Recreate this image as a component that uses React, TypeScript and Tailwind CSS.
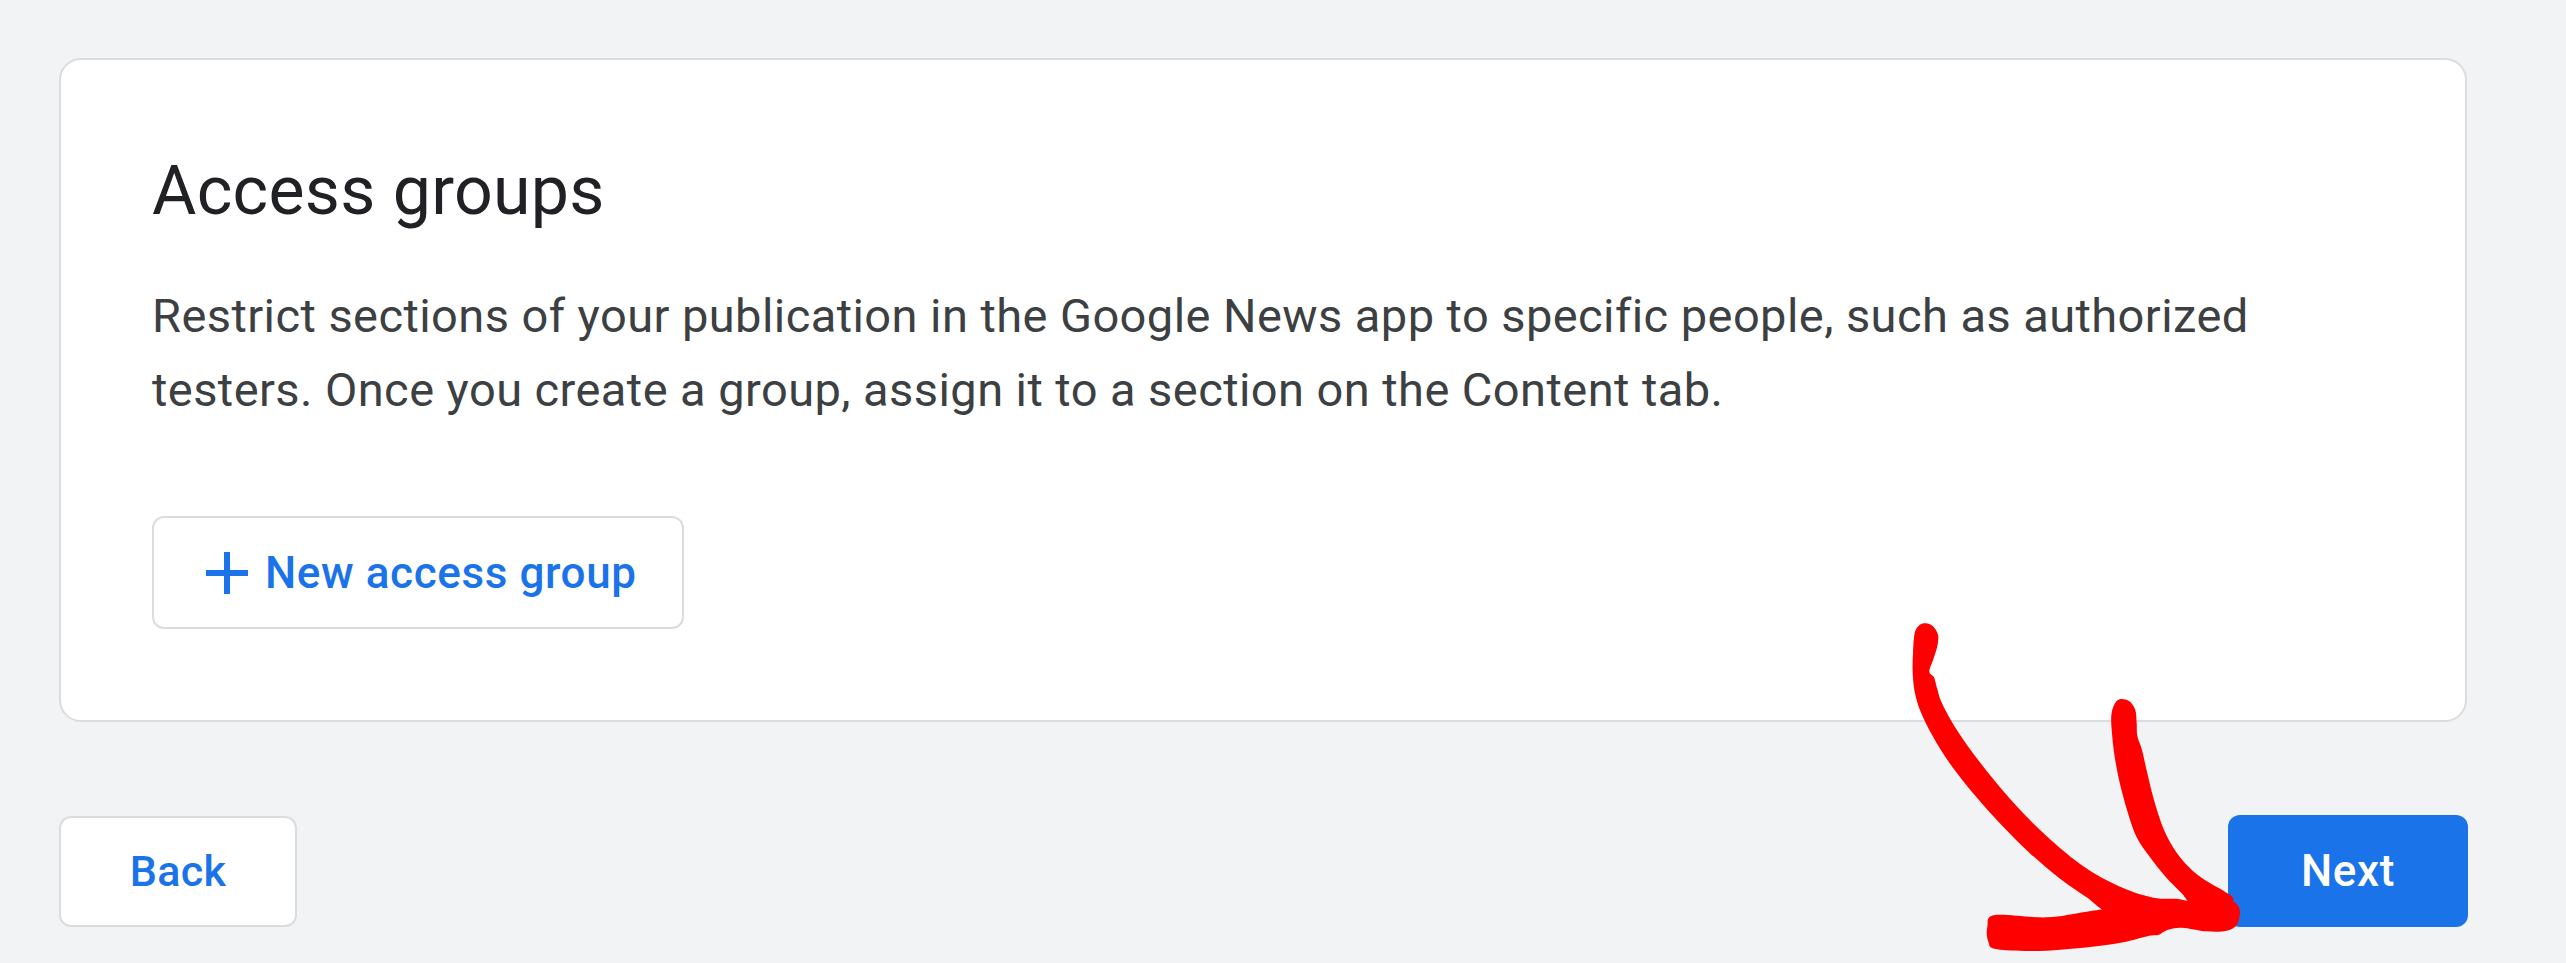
import React from "react";

const font = { fontFamily: "Roboto, 'Noto Sans', Arial, sans-serif" };

function PlusIcon() {
  return (
    <svg width="42" height="42" viewBox="5 5 14 14" aria-hidden="true">
      <path d="M19 13h-6v6h-2v-6H5v-2h6V5h2v6h6v2z" fill="#1a73e8" />
    </svg>
  );
}

type Pt = [number, number];

// Closed Catmull-Rom outline turned into cubic Bézier segments
function smoothClosed(pts: Pt[]): string {
  const n = pts.length;
  let d = `M${pts[0][0]},${pts[0][1]}`;
  for (let i = 0; i < n; i++) {
    const p0 = pts[(i - 1 + n) % n];
    const p1 = pts[i];
    const p2 = pts[(i + 1) % n];
    const p3 = pts[(i + 2) % n];
    const c1x = p1[0] + (p2[0] - p0[0]) / 6;
    const c1y = p1[1] + (p2[1] - p0[1]) / 6;
    const c2x = p2[0] - (p3[0] - p1[0]) / 6;
    const c2y = p2[1] - (p3[1] - p1[1]) / 6;
    d += ` C${c1x.toFixed(1)},${c1y.toFixed(1)} ${c2x.toFixed(1)},${c2y.toFixed(1)} ${p2[0]},${p2[1]}`;
  }
  return d + " Z";
}

const leftStroke: Pt[] = [
  [118, 76], [104, 100], [99, 160], [98, 215], [104, 275], [122, 335], [158, 408],
  [208, 488], [278, 578], [358, 668], [448, 758], [540, 836], [620, 892], [680, 935],
  [760, 940], [860, 930], [935, 915], [900, 898], [820, 893], [720, 860], [612, 800],
  [502, 710], [402, 610], [302, 490], [232, 392], [187, 312], [172, 268], [162, 232],
  [148, 215], [160, 178], [172, 138], [174, 104], [158, 78], [137, 70],
];

const rightStroke: Pt[] = [
  [705, 310], [694, 345], [696, 400], [704, 470], [720, 552], [744, 640], [770, 712],
  [810, 772], [858, 832], [905, 880], [935, 912], [1000, 930], [1060, 900], [1030, 872],
  [988, 848], [938, 812], [890, 758], [852, 690], [822, 600], [802, 520], [786, 450],
  [772, 408], [770, 370], [766, 330], [748, 304], [722, 297],
];

const baseStroke: Pt[] = [
  [345, 945], [500, 952], [620, 935], [760, 916], [880, 906], [980, 898], [1045, 898],
  [1078, 925], [1072, 972], [1040, 992], [980, 994], [905, 983], [862, 990], [835, 1005],
  [805, 1008], [700, 1032], [500, 1052], [352, 1048], [325, 1025], [322, 980],
];

// Hand-drawn red pointer leading down to the Next button
function Scribble() {
  return (
    <svg
      className="pointer-events-none absolute left-[1880px] top-[600px]"
      width="400"
      height="360"
      viewBox="0 0 1200 1080"
      aria-hidden="true"
    >
      <path d={smoothClosed(leftStroke)} fill="#ff0000" />
      <path d={smoothClosed(rightStroke)} fill="#ff0000" />
      <path d={smoothClosed(baseStroke)} fill="#ff0000" />
    </svg>
  );
}

export default function App() {
  return (
    <div
      className="relative min-h-[963px] w-full bg-[#f1f3f4] pl-[59px] pr-[99px] pt-[58px]"
      style={font}
    >
      <section className="rounded-[22px] border-2 border-[#dadce0] bg-white p-[91px]">
        <h1 className="text-[68px] font-normal leading-[80px] tracking-[0.3px] text-[#202124]">
          Access groups
        </h1>
        <p className="mt-[48px] max-w-[2160px] text-[47px] leading-[74px] tracking-[0.43px] text-[#3c4043]">
          Restrict sections of your publication in the Google News app to specific people, such as
          authorized testers. Once you create a group, assign it to a section on the Content tab.
        </p>
        <button
          type="button"
          className="mt-[89px] flex h-[113px] w-[532px] items-center gap-[17px] rounded-[12px] border-2 border-[#dadce0] bg-white pl-[52px] text-[44px] font-medium tracking-[0.6px] text-[#1a73e8]"
        >
          <PlusIcon />
          <span>New access group</span>
        </button>
      </section>

      <div className="mt-[93px] flex items-center justify-between">
        <button
          type="button"
          className="flex h-[111px] w-[238px] items-center justify-center rounded-[12px] border-2 border-[#dadce0] bg-white text-[43px] font-medium tracking-[0.3px] text-[#1a73e8]"
        >
          Back
        </button>
        <button
          type="button"
          className="mr-[-1px] flex h-[112px] w-[240px] items-center justify-center rounded-[12px] bg-[#1a73e8] text-[44px] font-medium tracking-[0.6px] text-white"
        >
          Next
        </button>
      </div>

      <Scribble />
    </div>
  );
}
